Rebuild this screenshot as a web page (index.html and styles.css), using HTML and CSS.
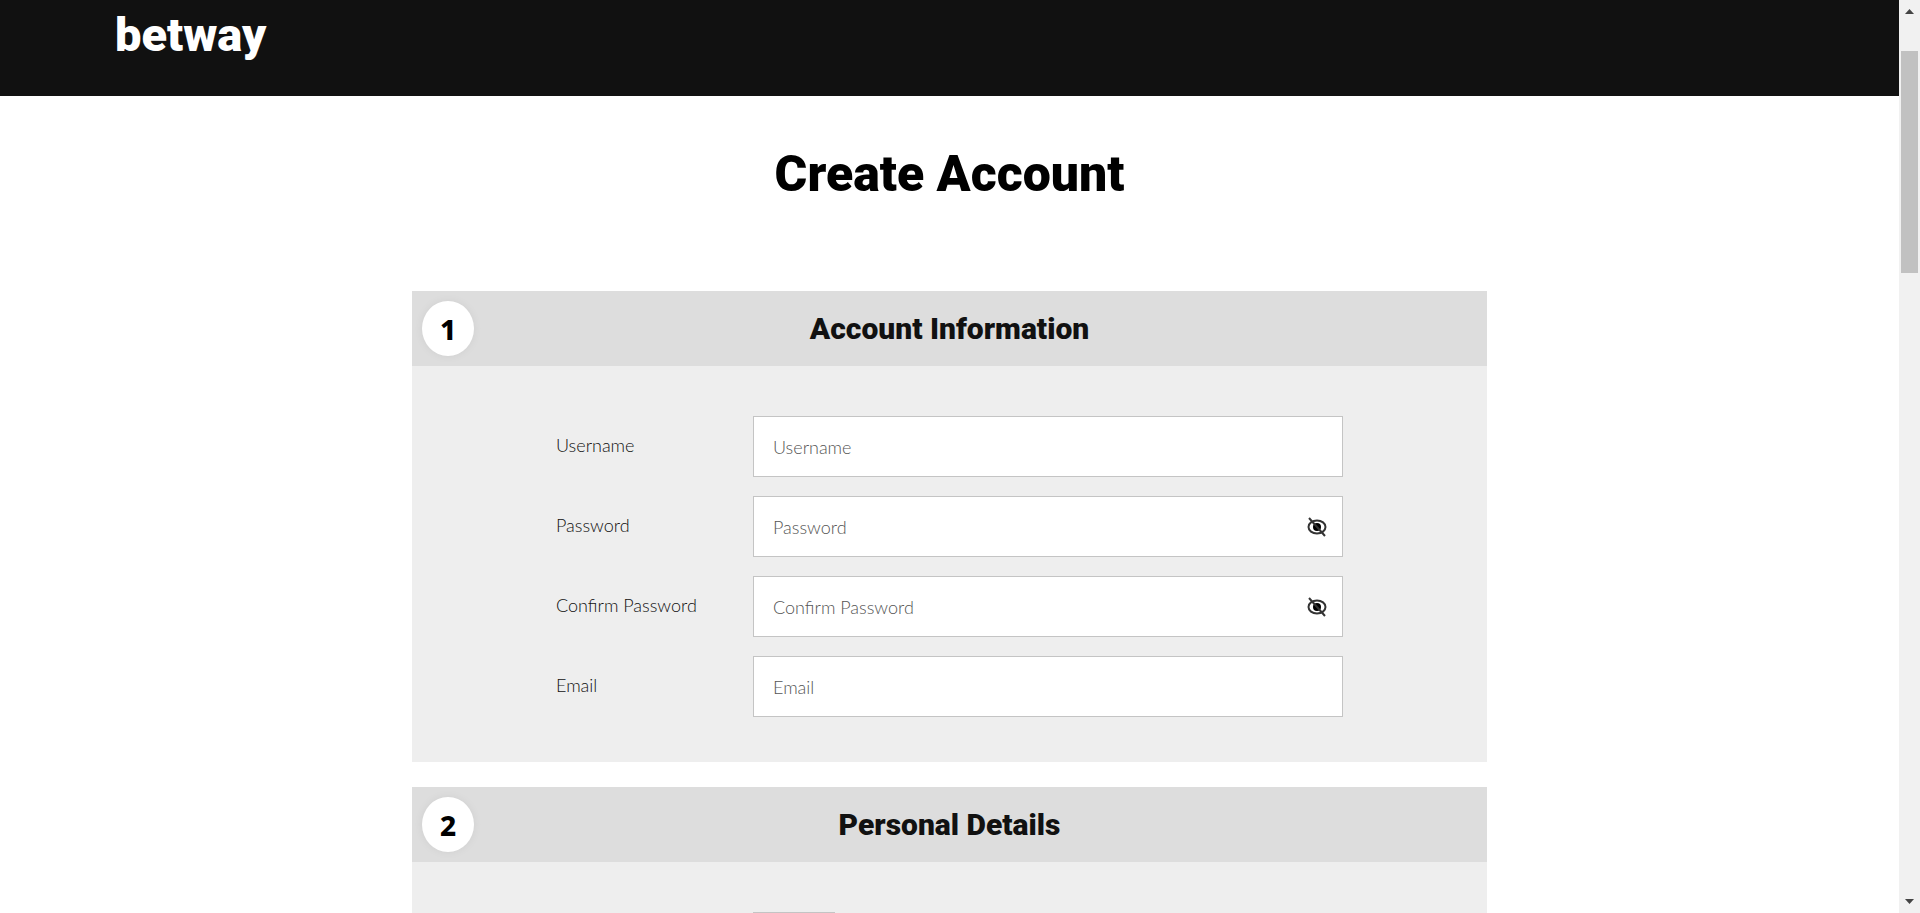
FILE: index.html
```html
<!DOCTYPE html>
<html lang="en">
<head>
<meta charset="utf-8">
<title>Create Account</title>
<link rel="stylesheet" href="styles.css">
</head>
<body>
<div class="window">
  <div class="page">
    <header class="site-header"><a class="logo" href="#">betway</a></header>
    <main class="content">
      <h1 class="title">Create Account</h1>
      <form class="sections">
        <section class="panel">
          <div class="panel-head">
            <span class="step">1</span>
            <h2 class="panel-title">Account Information</h2>
          </div>
          <div class="panel-body">
            <div class="row">
              <label class="label" for="username">Username</label>
              <div class="field"><input class="input" id="username" type="text" placeholder="Username"></div>
            </div>
            <div class="row">
              <label class="label" for="password">Password</label>
              <div class="field">
                <input class="input" id="password" type="password" placeholder="Password">
                <button class="reveal" type="button" aria-label="Show password">
                  <svg class="eye" viewBox="0 0 20 20" aria-hidden="true"><ellipse class="eye-line" cx="10" cy="10" rx="8.5" ry="6.5"/><circle cx="10" cy="10" r="4"/><path class="eye-line" d="M2 1l16 18"/></svg>
                </button>
              </div>
            </div>
            <div class="row">
              <label class="label" for="confirm">Confirm Password</label>
              <div class="field">
                <input class="input" id="confirm" type="password" placeholder="Confirm Password">
                <button class="reveal" type="button" aria-label="Show confirmed password">
                  <svg class="eye" viewBox="0 0 20 20" aria-hidden="true"><ellipse class="eye-line" cx="10" cy="10" rx="8.5" ry="6.5"/><circle cx="10" cy="10" r="4"/><path class="eye-line" d="M2 1l16 18"/></svg>
                </button>
              </div>
            </div>
            <div class="row">
              <label class="label" for="email">Email</label>
              <div class="field"><input class="input" id="email" type="email" placeholder="Email"></div>
            </div>
          </div>
        </section>
        <section class="panel">
          <div class="panel-head">
            <span class="step">2</span>
            <h2 class="panel-title">Personal Details</h2>
          </div>
          <div class="panel-body">
            <div class="row">
              <span class="label"></span>
              <div class="field"><select class="input select" aria-label="Salutation"><option></option></select></div>
            </div>
          </div>
        </section>
      </form>
    </main>
  </div>
  <div class="scrollbar" aria-hidden="true">
    <svg class="arrow" viewBox="0 0 9 5"><path d="M0 5L4.500 0L9 5z"/></svg>
    <div class="track"><div class="thumb"></div></div>
    <svg class="arrow" viewBox="0 0 9 5"><path d="M0 0L4.500 5L9 0z"/></svg>
  </div>
</div>
</body>
</html>
```
FILE: styles.css
```css
* { box-sizing: border-box; }
body { margin: 0; background: #fff; color: #111; font-family: Lato, "Liberation Sans", sans-serif; font-size: 18px; font-weight: 300; }
.window { display: flex; height: 100vh; overflow: hidden; }
.page { flex: 1; min-width: 0; overflow: hidden; }
.site-header { height: 96px; padding: 7px 115px; background: #111; }
.logo { color: #fff; font-family: Roboto, sans-serif; font-size: 47px; font-weight: 900; line-height: 56px; text-decoration: none; }
.content { max-width: 1075px; margin: 0 auto; padding-top: 50px; }
.title { margin: 0 0 89px; color: #000; font-family: Roboto, sans-serif; font-size: 50px; font-weight: 900; line-height: 56px; text-align: center; }
.sections { display: grid; gap: 25px; }
.panel-head { display: grid; grid-template-columns: 52px 1fr 52px; align-items: center; height: 75px; padding: 0 10px; background: #ddd; }
.step { display: grid; place-items: center; height: 55px; border-radius: 50%; background: #fff; box-shadow: 0 0 10px rgba(0, 0, 0, .06); font-family: "Noto Sans", sans-serif; font-size: 28px; font-weight: 800; line-height: 36px; color: #000; }
.panel-title { margin: 0; font-family: Roboto, sans-serif; font-size: 30px; font-weight: 900; line-height: 36px; text-align: center; }
.panel-body { display: grid; gap: 19px; padding: 50px 144px 45px; background: #eee; }
.row { display: grid; grid-template-columns: 197px 1fr; align-items: center; }
.label { padding-bottom: 4px; color: #111; }
.field { position: relative; }
.input { display: block; width: 100%; height: 61px; padding: 0 19px; border: 1px solid #c4c4c4; border-radius: 0; background: #fff; color: #333; font: inherit; }
.input::placeholder { color: #555; opacity: 1; }
.select { width: 82px; }
.reveal { position: absolute; top: 0; right: 10px; display: grid; place-items: center; width: 32px; height: 100%; padding: 0; border: 0; background: none; }
.eye { width: 20px; height: 20px; fill: #000; }
.eye-line { fill: none; stroke: #333; stroke-width: 2; }
.scrollbar { display: flex; flex-direction: column; align-items: center; width: 21px; padding: 9px 0; background: #f1f1f1; }
.arrow { width: 9px; height: 5px; fill: #444; }
.track { flex: 1; width: 17px; padding-top: 37px; }
.thumb { height: 222px; background: #c1c1c1; }
```
